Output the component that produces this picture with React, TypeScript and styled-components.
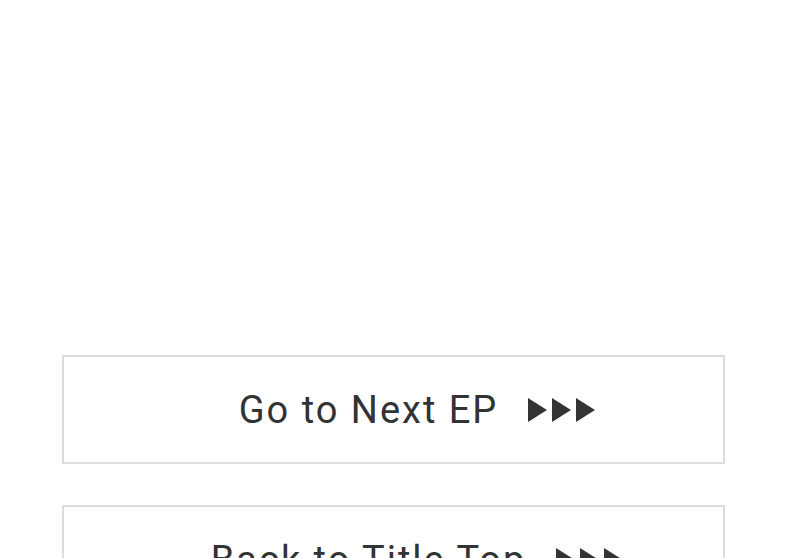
import styled, { createGlobalStyle } from "styled-components";

const GlobalStyle = createGlobalStyle`
  body {
    margin: 0;
    background-color: #ffffff;
    font-family: Roboto, "Noto Sans", sans-serif;
  }
`;

const Page = styled.div`
  display: grid;
  row-gap: 41px;
  padding: 355px 63px 0 62px;
  height: 558px;
  box-sizing: border-box;
  overflow: hidden;
`;

const NavButton = styled.a`
  display: flex;
  align-items: center;
  justify-content: center;
  column-gap: 30px;
  height: 109px;
  box-sizing: border-box;
  padding-left: 48px;
  border: 2px solid #dcdcdc;
  background-color: #ffffff;
  color: #333333;
  font-size: 38px;
  font-weight: 400;
  letter-spacing: 2px;
  text-decoration: none;
  cursor: pointer;
`;

const Label = styled.span`
  white-space: nowrap;
`;

const Arrows = () => (
  <svg width="68" height="24" viewBox="0 0 68 24" aria-hidden="true">
    {[0, 24, 48].map((x) => (
      <polygon key={x} points={`${x},0 ${x + 19},12 ${x},24`} fill="#333333" />
    ))}
  </svg>
);

const links = ["Go to Next EP", "Back to Title Top"];

const App = () => {
  return (
    <>
      <GlobalStyle />
      <Page>
        {links.map((text) => (
          <NavButton key={text}>
            <Label>{text}</Label>
            <Arrows />
          </NavButton>
        ))}
      </Page>
    </>
  );
};

export default App;
